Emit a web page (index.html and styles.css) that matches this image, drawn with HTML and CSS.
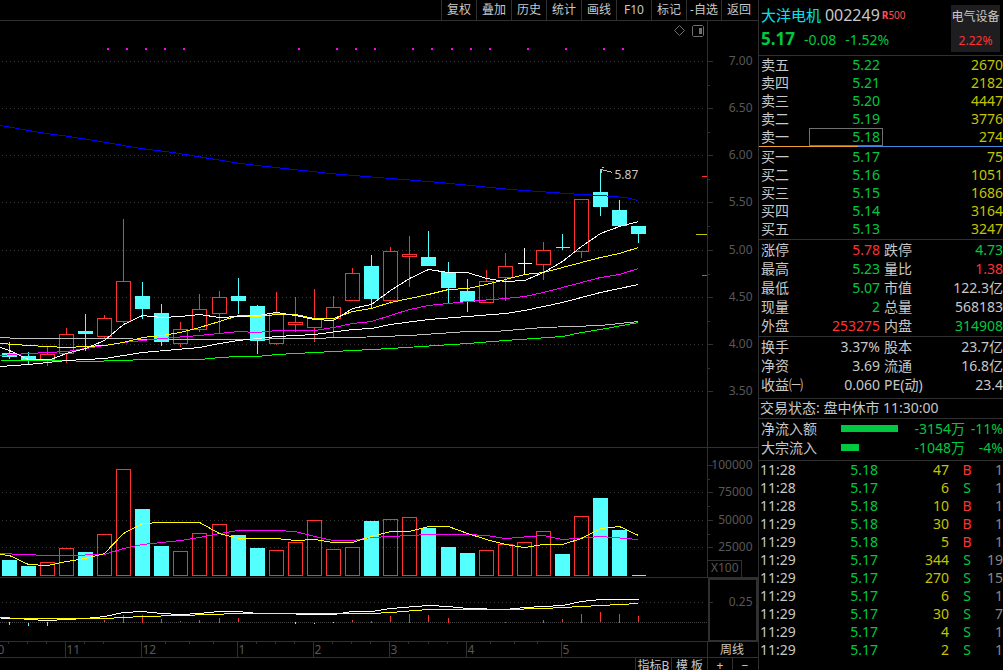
FILE: index.html
```html
<!DOCTYPE html>
<html lang="zh-CN">
<head>
<meta charset="utf-8">
<title>大洋电机 002249</title>
<link rel="stylesheet" href="styles.css">
</head>
<body>
<div class="app">
  <main class="charts">
    <nav class="toolbar">
      <button>复权</button><button>叠加</button><button>历史</button><button>统计</button><button>画线</button><button>F10</button><button>标记</button><button>-自选</button><button>返回</button>
    </nav>

    <svg class="panel" viewBox="-0.5 20.5 758 427" role="img" aria-label="周K线">
      <path class="dots" d="M1.5 61H704M1.5 108H704M1.5 155H704M1.5 202H704M1.5 250H704M1.5 297H704M1.5 344H704M1.5 391H704"/>
      <path class="rule" d="M707 20V448M707 61h5M707 108h5M707 155h5M707 202h5M707 250h5M707 297h5M707 344h5M707 391h5M707 85h2M707 132h2M707 179h2M707 226h2M707 274h2M707 321h2M707 368h2"/>
      <g class="axis">
        <text x="752" y="64">7.00</text><text x="752" y="111">6.50</text><text x="752" y="158">6.00</text><text x="752" y="205">5.50</text>
        <text x="752" y="253">5.00</text><text x="752" y="300">4.50</text><text x="752" y="347">4.00</text><text x="752" y="394">3.50</text>
      </g>
      <path class="events" d="M106.500 48.500h2m17 0h2m17 0h2m17 0h2m17 0h2m113 0h2m36 0h2m17 0h2m17 0h2m36 0h2m17 0h2m18 0h2m17 0h2m17 0h2m36 0h2m36 0h2m36 0h2m17 0h2"/>
      <path class="tool" d="M679 25l5 5-5 5-5-5zM693 25h9l1 1v9l-1 1h-9l-1-1v-9z"/>
      <path class="toolfill" d="M699 28h2v5h-2z"/>
      <path class="up" d="M47 346V354M40 354h14v5h-14zM47 359V365M66 327V334M59 334h14v19h-14zM66 353V362M104 314V318M97 318h14v18h-14zM104 336V338M123 218V281M116 281h14v40h-14zM123 321V322M180 321V329M173 329h14v14h-14zM180 343V346M199 293V309M192 309h14v20h-14zM199 329V331M219 290V297M212 297h14v16h-14zM219 313V333M276 291V313M269 313h14v30h-14zM276 343V344M295 296V322M288 322h14v2h-14zM295 324V331M314 288V318M307 318h14v9h-14zM314 327V341M333 295V307M326 307h14v11h-14zM333 318V337M352 267V273M345 273h14v27h-14zM390 246V251M383 251h14v49h-14zM390 300V303M409 235V254M402 254h14v2h-14zM409 256V286M486 269V281M479 281h14v21h-14zM505 252V266M498 266h14v11h-14zM505 277V300M543 241V250M536 250h14v14h-14zM543 264V279M574 199h14v52h-14zM581 251V257"/>
      <path class="down" d="M9 341V358M2 353h14v3h-14zM28 351V363M21 356h14v4h-14zM85 313V350M78 331h14v2h-14zM142 281V318M135 296h14v12h-14zM161 303V345M154 313h14v28h-14zM238 277V313M231 296h14v4h-14zM257 304V353M250 306h14v34h-14zM371 254V307M364 266h14v32h-14zM428 230V257M421 257h14v8h-14zM448 261V302M441 272h14v15h-14zM467 278V311M460 291h14v10h-14zM562 233V249M555 247h14M600 168V215M593 192h14v14h-14zM619 199V210M612 210h14v15h-14zM638 226V242M631 226h14v7h-14z"/>
      <path class="line white" d="M524 247V273M517 263h14"/>
      <polyline class="line blue" points="0,125 45,133 62,135 100,141 140,148 165,151 185,154 215,159 240,163 275,167 330,173 365,176 428,181 460,184 510,189 580,194 600,195 625,197 638,200"/>
      <polyline class="line grey" points="0,337 19,338 123,338 142,339 238,339 300,338 352,337 409,335 467,331 495,331 543,327 600,325 638,321"/>
      <polyline class="line green" points="0,360 66,360 85,361 123,360 142,359 200,359 219,357 238,356 257,356 276,354 333,351 390,348 467,343 505,340 562,336 581,332 600,329 638,322"/>
      <polyline class="line white" points="0,366 28,364 66,360 104,358 142,352 199,347 219,343 238,340 276,336 314,334 352,329 371,328 390,324 428,319 467,316 505,313 524,310 562,302 600,292 638,284"/>
      <polyline class="line magenta" points="0,355 28,353 66,351 85,348 104,345 123,342 142,340 161,338 199,335 219,333 238,331 257,332 276,330 314,330 333,327 352,323 371,321 390,315 409,309 428,305 467,301 505,298 524,296 543,292 562,287 581,282 600,277 619,274 638,268"/>
      <polyline class="line yellow" points="0,343 28,345 47,346 66,347 85,346 104,345 123,342 142,337 161,335 180,332 199,327 219,321 238,315 257,316 276,314 295,314 314,318 333,318 352,311 371,308 390,302 409,298 428,294 448,289 467,288 486,284 505,279 524,274 543,272 562,267 581,262 600,257 619,253 638,247"/>
      <polyline class="line white" points="0,347 9,350 28,359 50,359 66,353 85,348 104,340 123,324 142,315 161,317 180,316 199,314 219,317 238,316 257,315 276,312 295,315 314,319 333,320 352,308 371,304 390,290 409,278 428,269 448,272 467,272 486,278 505,281 524,280 543,272 562,261 581,246 600,233 619,226 638,221"/>
      <path class="line grey" d="M603 167h-2M600 168v2M601 169l11 3M601 169v3"/>
      <text class="note" x="614" y="178">5.87</text>
      <path class="line red" d="M701.500 176h5"/>
      <path class="line gold" d="M695.500 234h11"/>
      <path class="line mark" d="M701.500 275h5"/>
      <path class="rule" d="M-1 447H758"/>
    </svg>

    <svg class="panel" viewBox="-0.5 447.5 758 130" role="img" aria-label="成交量">
      <path class="dots" d="M1.5 492H704M1.5 520H704M1.5 547H704"/>
      <path class="rule" d="M707 447V578M707 465h5M707 492h5M707 520h5M707 547h5M707 479h2M707 506h2M707 534h2M707 560h34v17M-1 577H758"/>
      <g class="axis">
        <text x="752" y="468">100000</text><text x="752" y="495">75000</text><text x="752" y="523">50000</text><text x="752" y="550">25000</text><text x="738" y="571">X100</text>
      </g>
      <path class="up" d="M40 575v-13h14v13zM59 575v-27h14v27zM97 575v-41h14v41zM116 575v-106h14v106zM173 575v-24h14v24zM192 575v-42h14v42zM212 575v-51h14v51zM269 575v-25h14v25zM288 575v-33h14v33zM307 575v-55h14v55zM326 575v-26h14v26zM345 575v-28h14v28zM383 575v-56h14v56zM402 575v-58h14v58zM479 575v-25h14v25zM498 575v-31h14v31zM517 575v-33h14v33zM536 575v-44h14v44zM574 575v-59h14v59z"/>
      <path class="down" d="M2 575v-15h14v15zM21 575v-9h14v9zM78 575v-23h14v23zM135 575v-66h14v66zM154 575v-29h14v29zM231 575v-40h14v40zM250 575v-27h14v27zM364 575v-54h14v54zM421 575v-47h14v47zM441 575v-28h14v28zM460 575v-22h14v22zM555 575v-21h14v21zM593 575v-77h14v77zM612 575v-45h14v45zM631 575h14"/>
      <polyline class="line magenta" points="0,553 47,555 66,555 104,554 123,548 142,544 180,540 199,537 219,533 238,530 276,530 295,531 314,536 333,540 352,540 371,537 409,535 428,534 467,534 486,535 505,538 543,535 562,539 600,536 638,539"/>
      <polyline class="line yellow" points="0,554 9,555 28,564 47,565 66,561 85,558 104,553 123,533 142,523 161,522 199,522 219,533 238,538 276,538 295,540 314,539 333,542 352,542 371,536 390,531 409,531 428,526 448,526 467,533 486,539 505,544 524,547 543,544 562,544 581,538 600,528 619,526 638,535"/>
    </svg>

    <svg class="panel" viewBox="-0.5 577.5 758 64" role="img" aria-label="MACD">
      <path class="dots" d="M1.5 602H704"/>
      <path class="zero" d="M-0.500 622H707"/>
      <path class="rule" d="M707 602h5M-1 641H758"/>
      <path class="frame" d="M708.500 578.500h48v62h-48z"/>
      <g class="axis"><text x="752" y="605">0.25</text></g>
      <path class="line red" d="M104 619.500v2M123 614.500v8M142 614.500v8M161 618.500v4M180 620.500v1M199 619.500v3M219 617.500v5M238 617.500v4M352 619.500v2M371 620.500v2M390 615.500v6M409 613.500v9M428 614.500v7M448 617.500v5M505 621.500v1M543 619.500v3M562 618.500v3M581 613.500v9M600 611.500v10M619 613.500v9M638 615.500v6"/>
      <path class="line cyan" d="M9 621.500v3M28 622.500v3M47 621.500v4M295 621.500v2M314 622.500v1M333 621.500v1"/>
      <polyline class="line white" points="0,618 19,618 28,619 47,620 66,619 85,618 104,616 123,612 142,611 161,613 180,614 199,613 219,611 238,611 257,613 333,614 352,611 371,611 390,608 428,605 448,606 467,608 505,609 524,607 562,605 581,601 600,599 638,599"/>
      <polyline class="line yellow" points="0,617 19,618 104,618 142,616 180,615 238,613 371,613 390,612 428,609 505,609 543,608 600,605 638,603"/>
    </svg>

    <div class="timeline">
      <svg class="panel" viewBox="-0.5 641.5 708 16" role="img" aria-label="月份">
        <path class="rule" d="M65 641v17M141 641v17M237 641v17M313 641v17M389 641v17M466 641v17M561 641v17M707 641v17M8 641v2M27 641v2M46 641v2M84 641v2M103 641v2M165 641v2M189 641v2M213 641v2M256 641v2M275 641v2M294 641v2M332 641v2M351 641v2M370 641v2M408 641v2M428 641v2M447 641v2M490 641v2M514 641v2M537 641v2M-1 657H708"/>
        <g class="months"><text x="-3" y="653">0</text><text x="66" y="653">11</text><text x="142" y="653">12</text><text x="238" y="653">1</text><text x="314" y="653">2</text><text x="390" y="653">3</text><text x="467" y="653">4</text><text x="562" y="653">5</text></g>
      </svg>
      <button class="period">周线</button>
    </div>

    <div class="footbar">
      <button class="wide">指标B</button><button class="wide">模 板</button><button>+</button><button>−</button>
    </div>
  </main>

  <aside class="quote">
    <header class="head">
      <div>
        <h1 class="name">大洋电机 <span class="code">002249</span><span class="tag"><b>R</b>500</span></h1>
        <p class="last"><strong>5.17</strong><span>-0.08</span><span>-1.52%</span></p>
      </div>
      <a class="sector" href="#sector"><span>电气设备</span><span class="r">2.22%</span></a>
    </header>

    <table class="book">
      <tr><th>卖五</th><td>5.22</td><td>2670</td></tr>
      <tr><th>卖四</th><td>5.21</td><td>2182</td></tr>
      <tr><th>卖三</th><td>5.20</td><td>4447</td></tr>
      <tr><th>卖二</th><td>5.19</td><td>3776</td></tr>
      <tr><th>卖一</th><td class="picked">5.18</td><td>274</td></tr>
    </table>
    <div class="balance"></div>
    <table class="book bids">
      <tr><th>买一</th><td>5.17</td><td>75</td></tr>
      <tr><th>买二</th><td>5.16</td><td>1051</td></tr>
      <tr><th>买三</th><td>5.15</td><td>1686</td></tr>
      <tr><th>买四</th><td>5.14</td><td>3164</td></tr>
      <tr><th>买五</th><td>5.13</td><td>3247</td></tr>
    </table>

    <dl class="stats">
      <dt>涨停</dt><dd class="r">5.78</dd><dt>跌停</dt><dd class="g">4.73</dd>
      <dt>最高</dt><dd class="g">5.23</dd><dt>量比</dt><dd class="r">1.38</dd>
      <dt>最低</dt><dd class="g">5.07</dd><dt>市值</dt><dd>122.3亿</dd>
      <dt>现量</dt><dd class="g">2</dd><dt>总量</dt><dd>568183</dd>
      <dt>外盘</dt><dd class="r">253275</dd><dt>内盘</dt><dd class="g">314908</dd>
    </dl>
    <dl class="stats basics">
      <dt>换手</dt><dd>3.37%</dd><dt>股本</dt><dd>23.7亿</dd>
      <dt>净资</dt><dd>3.69</dd><dt>流通</dt><dd>16.8亿</dd>
      <dt>收益㈠</dt><dd>0.060</dd><dt>PE(动)</dt><dd>23.4</dd>
    </dl>
    <p class="status">交易状态: 盘中休市 11:30:00</p>

    <div class="flows">
      <div class="flow"><span>净流入额</span><i class="bar" style="width:57px"></i><span class="g amt">-3154万</span><span class="g pct">-11%</span></div>
      <div class="flow"><span>大宗流入</span><i class="bar" style="width:18px"></i><span class="g amt">-1048万</span><span class="g pct">-4%</span></div>
    </div>

    <table class="ticks">
      <tr><td>11:28</td><td>5.18</td><td>47</td><td class="r">B</td><td>1</td></tr>
      <tr><td>11:28</td><td>5.17</td><td>6</td><td class="g">S</td><td>1</td></tr>
      <tr><td>11:28</td><td>5.18</td><td>10</td><td class="r">B</td><td>1</td></tr>
      <tr><td>11:29</td><td>5.18</td><td>30</td><td class="r">B</td><td>1</td></tr>
      <tr><td>11:29</td><td>5.18</td><td>5</td><td class="r">B</td><td>1</td></tr>
      <tr><td>11:29</td><td>5.17</td><td>344</td><td class="g">S</td><td>19</td></tr>
      <tr><td>11:29</td><td>5.17</td><td>270</td><td class="g">S</td><td>15</td></tr>
      <tr><td>11:29</td><td>5.17</td><td>6</td><td class="g">S</td><td>1</td></tr>
      <tr><td>11:29</td><td>5.17</td><td>30</td><td class="g">S</td><td>7</td></tr>
      <tr><td>11:29</td><td>5.17</td><td>4</td><td class="g">S</td><td>1</td></tr>
      <tr><td>11:29</td><td>5.17</td><td>2</td><td class="g">S</td><td>1</td></tr>
    </table>
  </aside>
</div>
</body>
</html>
```
FILE: styles.css
```css
:root {
  --rule: #303030;
  --text: #c8c8c8;
  --green: #00c840;
  --red: #ff3232;
  --gold: #c4c400;
}

* { box-sizing: border-box; }

body {
  margin: 0;
  background: #000;
  color: var(--text);
  font: 14px/18px "Noto Sans", "Noto Sans CJK SC", sans-serif;
}

h1, p, dl, dd { margin: 0; }

button {
  padding: 0;
  border: 0;
  background: none;
  color: var(--text);
  font: inherit;
  cursor: pointer;
}

.app {
  display: grid;
  grid-template-columns: minmax(0, 1fr) 245px;
  height: 100vh;
  overflow: hidden;
}

.charts {
  display: flex;
  flex-direction: column;
  min-width: 0;
  overflow: hidden;
}

.toolbar {
  display: flex;
  flex: none;
  justify-content: flex-end;
  height: 21px;
  padding-right: 2px;
  border-bottom: 1px solid var(--rule);
  font-size: 12px;
  line-height: 20px;
}

.toolbar button {
  width: 35px;
  border-left: 1px solid var(--rule);
  white-space: nowrap;
}

/* Charts */
.panel {
  display: block;
  flex: none;
  width: 100%;
  height: auto;
  shape-rendering: crispEdges;
}

.panel path, .panel polyline { fill: none; stroke-width: 1; }
.panel .rule { stroke: var(--rule); }
.panel .dots { stroke: #363636; stroke-dasharray: 1 3; }
.panel .zero { stroke: #444; stroke-dasharray: 1 1; }
.panel .frame { stroke: var(--rule); stroke-width: 2; }
.panel .events { stroke: #f0f; stroke-width: 2; }
.panel .tool { stroke: #707070; shape-rendering: auto; }
.panel .toolfill { fill: #707070; stroke: #707070; }
.panel .up { stroke: var(--red); }
.panel .down { stroke: #54ffff; fill: #54ffff; }
.line.white { stroke: #fff; }
.line.grey { stroke: #c0c0c0; }
.line.blue { stroke: #00f; }
.line.green { stroke: #0f0; }
.line.magenta { stroke: #f0f; }
.line.yellow { stroke: #ff0; }
.line.red { stroke: var(--red); }
.line.cyan { stroke: #54ffff; }
.line.gold { stroke: var(--gold); }
.line.mark { stroke: #00b050; }

.axis, .months { fill: #585858; font-size: 12px; }
.axis { text-anchor: end; }
.note { fill: var(--text); font-size: 12px; }

.timeline {
  display: grid;
  flex: none;
  grid-template-columns: 708fr 50fr;
}

.period {
  padding-right: 2px;
  border-bottom: 1px solid var(--rule);
  font-size: 12px;
  line-height: 15px;
}

.footbar {
  display: flex;
  flex: 1 0 12px;
  justify-content: flex-end;
  align-items: flex-start;
  padding-right: 1px;
  font-size: 12px;
  line-height: 16px;
}

.footbar button {
  width: 25px;
  border-left: 1px solid var(--rule);
  white-space: nowrap;
}

.footbar .wide { width: 36px; }

/* Quote panel */
.quote {
  border-left: 1px solid var(--rule);
  overflow: hidden;
}

.r { color: var(--red); }
.g { color: var(--green); }

.head {
  display: flex;
  justify-content: space-between;
  height: 56px;
  padding: 5px 3px 3px 2px;
  border-bottom: 1px solid var(--rule);
}

.name {
  color: #00e4f0;
  font-size: 15px;
  font-weight: 400;
  line-height: 20px;
  white-space: nowrap;
}

.code { color: var(--text); font-size: 16px; }

.tag {
  margin-left: 2px;
  color: #ff5050;
  font-size: 10px;
  line-height: 10px;
  vertical-align: 2px;
}

.last {
  display: flex;
  align-items: baseline;
  gap: 9px;
  padding-top: 5px;
  color: var(--green);
}

.last strong { font-size: 17px; }

.sector {
  display: flex;
  flex-direction: column;
  justify-content: space-between;
  width: 49px;
  padding: 3px 0 2px;
  background: #1e1e20;
  color: var(--text);
  font-size: 12px;
  text-align: center;
  text-decoration: none;
  white-space: nowrap;
}

.sector .r { color: var(--red); }

table { width: 100%; border-spacing: 0; table-layout: fixed; }
th, td { height: 18px; padding: 0; line-height: 16px; text-align: right; }
th { width: 50px; padding-left: 2px; font-weight: 400; text-align: left; }

.book td { color: var(--gold); }
.book td:nth-child(2) { width: 74px; padding-right: 3px; color: var(--green); }
.book .picked { outline: 1px solid #707070; outline-offset: -1px; }

.balance {
  height: 1px;
  background: linear-gradient(90deg, #f0a030 99px, #4088e0 99px);
}

.bids {
  padding: 1px 0;
  border-bottom: 1px solid var(--rule);
}

.stats {
  display: grid;
  grid-template-columns: 48px 71px auto 1fr;
  grid-auto-rows: 19px;
  padding: 1px 0 0 2px;
  border-bottom: 1px solid var(--rule);
  line-height: 17px;
  white-space: nowrap;
}

.stats dt:nth-of-type(even) { padding-left: 4px; }
.stats dd { text-align: right; }
.basics { padding-bottom: 3px; }

.status {
  height: 20px;
  padding-left: 1px;
  border-bottom: 1px solid var(--rule);
  line-height: 17px;
}

.flows {
  padding: 0 0 3px 2px;
  border-bottom: 1px solid var(--rule);
  line-height: 19px;
}

.flow {
  display: grid;
  grid-template-columns: 80px 1fr auto 38px;
  align-items: center;
  white-space: nowrap;
}

.bar { height: 7px; background: var(--green); }
.pct { text-align: right; }

.ticks td:nth-child(1) { width: 60px; padding-left: 1px; text-align: left; }
.ticks td:nth-child(2) { width: 59px; color: var(--green); }
.ticks td:nth-child(3) { width: 71px; color: var(--gold); }
.ticks td:nth-child(4) { width: 36px; text-align: center; }
.ticks td:nth-child(5) { color: #888; }
```
